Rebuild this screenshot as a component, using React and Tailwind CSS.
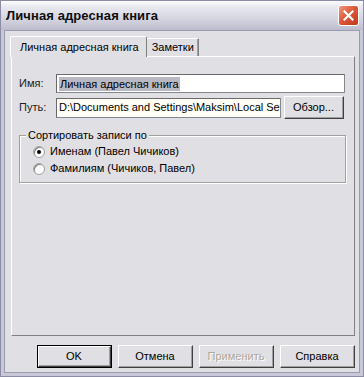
import React from "react";

const F = { fontFamily: '"Liberation Sans", Arial, sans-serif' };

function Btn({ children, def, disabled, w = "w-[75px]" }) {
  return (
    <div className={`${w} h-[23px] ${def ? "border border-black" : ""} box-border`}>
      <div className="h-full w-full border-t border-l border-t-white border-l-white border-r border-b border-r-[#404040] border-b-[#404040] box-border">
        <div className="h-full w-full border-r border-b border-r-[#a0a0a0] border-b-[#a0a0a0] bg-[#e0dfe3] flex items-center justify-center text-[11px] leading-none">
          {disabled ? (
            <span className="text-[#aca899]" style={{ textShadow: "1px 1px 0 #fff" }}>{children}</span>
          ) : (
            <span className="text-black">{children}</span>
          )}
        </div>
      </div>
    </div>
  );
}

function Radio({ checked, label }) {
  return (
    <div className="flex items-center h-[17px]">
      <div className="w-[12px] h-[12px] rounded-full border border-[#a0a0a0] bg-white flex items-center justify-center" style={{ boxShadow: "inset 1px 1px 0 #808080" }}>
        {checked && <div className="w-[4px] h-[4px] rounded-full bg-black" />}
      </div>
      <span className="ml-[5px] text-[11px] text-black">{label}</span>
    </div>
  );
}

export default function App() {
  return (
    <div className="w-[364px] h-[377px] bg-[#8c8ca4] p-[1px] box-border" style={F}>
      <div className="w-full h-full flex flex-col bg-[#c8c8d8]">
        {/* Title bar */}
        <div
          className="h-[29px] flex items-center justify-between pl-[5px] pr-[4px] shrink-0"
          style={{ background: "linear-gradient(#fdfdff 0%, #e8e8f0 20%, #d6d6e2 60%, #bcbccd 100%)" }}
        >
          <span className="text-[13px] font-bold text-[#0e0e0e] tracking-[0.1px]">Личная адресная книга</span>
          <div
            className="w-[21px] h-[21px] rounded-[3px] border border-white flex items-center justify-center"
            style={{ background: "linear-gradient(135deg, #ee9a80 0%, #dc5a3a 45%, #c0391c 100%)" }}
          >
            <svg width="11" height="11" viewBox="0 0 11 11">
              <path d="M1.5 1.5 L9.5 9.5 M9.5 1.5 L1.5 9.5" stroke="white" strokeWidth="2.2" strokeLinecap="square" />
            </svg>
          </div>
        </div>
        {/* Client */}
        <div className="flex-1 mx-[3px] mb-[3px] bg-[#e0dfe3] border border-[#9a9ab0] flex flex-col px-[4px] pt-[4px]">
          {/* Tabs */}
          <div className="flex items-end h-[21px] pl-[1px]">
            <div className="h-[21px] pl-[9px] pr-[7px] bg-[#e0dfe3] border-t border-l border-white border-r border-r-[#808080] rounded-t-[2px] flex items-center text-[11px] relative z-10 -mb-[1px]">
              Личная адресная книга
            </div>
            <div className="h-[18px] pl-[5px] pr-[4px] border-t border-r border-t-white border-r-[#808080] shadow-[inset_-1px_0_0_#a0a0a0] flex items-center text-[11px]">
              Заметки
            </div>
          </div>
          {/* Panel */}
          <div className="ml-[2px] h-[280px] border-t border-l border-white border-r border-b border-r-[#808080] border-b-[#808080] flex flex-col px-[7px] pt-[17px]">
            <div className="flex items-center h-[19px]">
              <span className="w-[37px] text-[11px] text-[#202020]">Имя:</span>
              <div className="w-[289px] h-[19px] border border-[#828790] border-t-[#6a6a6a] border-l-[#6a6a6a] bg-white flex items-center pl-[2px]">
                <span className="bg-[#b9b9c4] text-black text-[11px] leading-[14px] px-[1px]">Личная адресная книга</span>
              </div>
            </div>
            <div className="flex items-center h-[21px] mt-[4px]">
              <span className="w-[37px] text-[11px] text-[#202020]">Путь:</span>
              <div className="w-[225px] h-[20px] border border-[#828790] border-t-[#6a6a6a] border-l-[#6a6a6a] bg-[#fffff8] flex items-center pl-[2px] overflow-hidden whitespace-nowrap">
                <span className="text-[11px] text-black">D:\Documents and Settings\Maksim\Local Sett</span>
              </div>
              <div className="ml-[3px]">
                <Btn w="w-[60px]">Обзор...</Btn>
              </div>
            </div>
            {/* Group box */}
            <div className="mt-[17px] w-[327px] h-[48px] border border-[#a0a0a0] shadow-[1px_1px_0_#ffffff,inset_1px_1px_0_#ffffff] relative pl-[13px] pt-[7px]">
              <span className="absolute left-[6px] -top-[8px] bg-[#e0dfe3] px-[2px] text-[11px] text-black leading-[15px]">Сортировать записи по</span>
              <Radio checked label="Именам (Павел Чичиков)" />
              <Radio label="Фамилиям (Чичиков, Павел)" />
            </div>
          </div>
          {/* Buttons */}
          <div className="flex justify-end gap-[6px] mt-[9px]">
            <Btn def>OK</Btn>
            <Btn>Отмена</Btn>
            <Btn disabled>Применить</Btn>
            <Btn>Справка</Btn>
          </div>
        </div>
      </div>
    </div>
  );
}
